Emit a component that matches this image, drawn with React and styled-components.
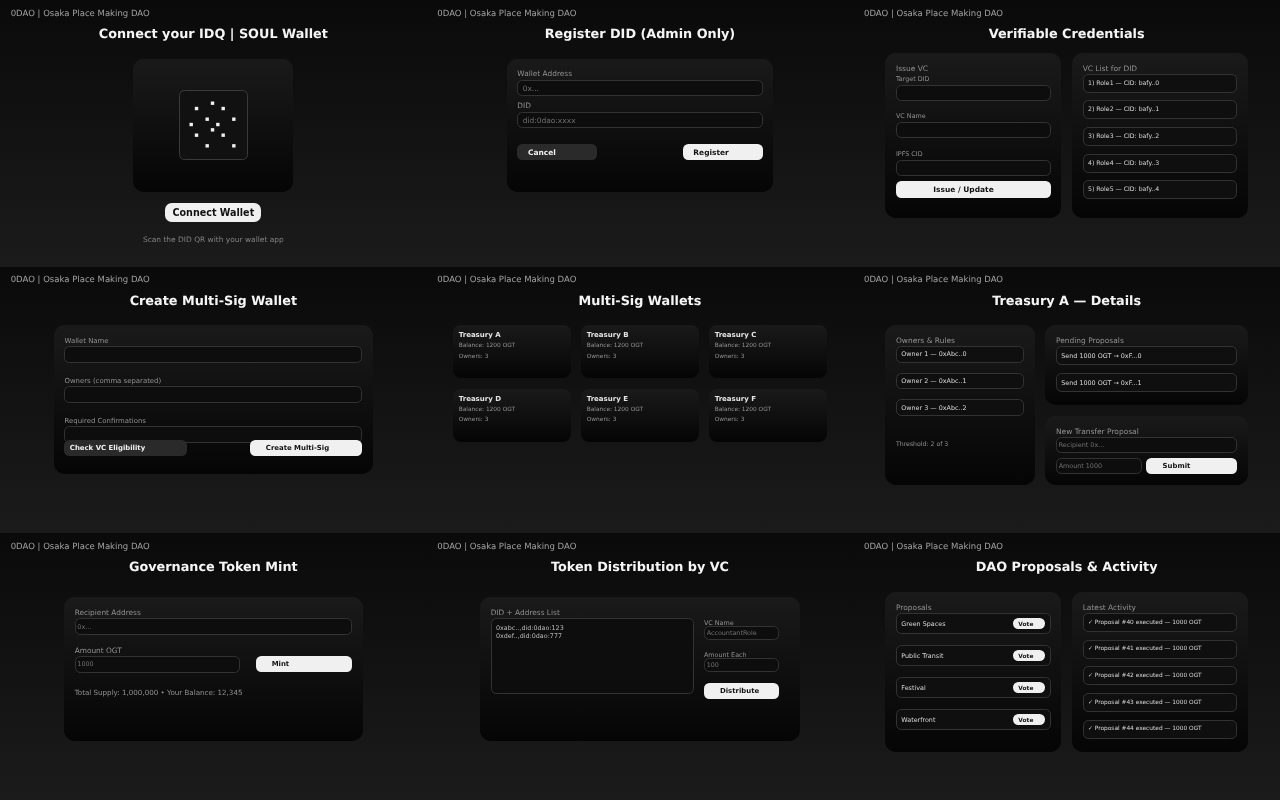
import React from 'react';
import styled, { createGlobalStyle } from 'styled-components';

const GlobalStyle = createGlobalStyle`
    html, body {
        margin: 0;
        padding: 0;
        background: #111;
    }
    * {
        box-sizing: border-box;
    }
`;

const qrDots = [[1, 1], [4, 0], [6, 1], [3, 3], [8, 3], [0, 4], [5, 4], [4, 5], [1, 6], [6, 6], [3, 8], [8, 8]];
const roles = [1, 2, 3, 4, 5];
const wallets = ['A', 'B', 'C', 'D', 'E', 'F'];
const proposals = ['Green Spaces', 'Public Transit', 'Festival', 'Waterfront'];

function Screen({ title, top, gap, children }) {
    return (
        <Tile>
            <Brand>0DAO | Osaka Place Making DAO</Brand>
            <Title>{title}</Title>
            <Body $top={top} $gap={gap}>{children}</Body>
        </Tile>
    );
}

function Field({ label, placeholder, gap, height, size }) {
    return (
        <FieldBox $gap={gap}>
            <Label $size={size}>{label}</Label>
            <Input readOnly placeholder={placeholder} $height={height} />
        </FieldBox>
    );
}

function App() {
    return (
        <Board>
            <GlobalStyle />

            <Screen title="Connect your IDQ | SOUL Wallet" top={17.3}>
                <ConnectColumn>
                    <QrPanel>
                        <QrFrame>
                            <svg width="69" height="70" viewBox="0 0 69 70">
                                {qrDots.map(([x, y]) => (
                                    <rect key={`${x}-${y}`} x={10.5 + x * 5.33} y={11.5 + y * 5.33} width="3.4" height="3.4" fill="#f0f0f0" />
                                ))}
                            </svg>
                        </QrFrame>
                    </QrPanel>
                    <ConnectButton>Connect Wallet</ConnectButton>
                    <Hint>Scan the DID QR with your wallet app</Hint>
                </ConnectColumn>
            </Screen>

            <Screen title="Register DID (Admin Only)" top={17.3}>
                <Panel $w={266.67} $h={133.3}>
                    <Stack $gap={5.33}>
                        <Field label="Wallet Address" placeholder="0x..." />
                        <Field label="DID" placeholder="did:0dao:xxxx" />
                    </Stack>
                    <SplitRow $mt={16}>
                        <Button $dark $w={80} $pad={10.67} $size={7.47}>Cancel</Button>
                        <Button $w={80} $pad={10.67} $size={7.47}>Register</Button>
                    </SplitRow>
                </Panel>
            </Screen>

            <Screen title="Verifiable Credentials" top={11.6} gap={10.67}>
                <Panel $w={176} $h={165}>
                    <SectionTitle>Issue VC</SectionTitle>
                    <Stack $gap={10.67}>
                        <Field label="Target DID" gap={3} size={6.4} />
                        <Field label="VC Name" gap={3} size={6.4} />
                        <Field label="IPFS CID" gap={3} size={6.4} />
                    </Stack>
                    <Button $w={155} $pad={37.3} $mt={5.33} $size={7.47}>Issue / Update</Button>
                </Panel>
                <Panel $w={176} $h={165}>
                    <SectionTitle>VC List for DID</SectionTitle>
                    <Stack $gap={7.67}>
                        {roles.map((n) => (
                            <ListRow key={n} $size={6.2}>{n}) Role{n} — CID: bafy..{n - 1}</ListRow>
                        ))}
                    </Stack>
                </Panel>
            </Screen>

            <Screen title="Create Multi-Sig Wallet" top={17.3}>
                <Panel $w={319} $h={148.7}>
                    <Stack $gap={13.33}>
                        <Field label="Wallet Name" gap={2} height={16.67} size={6.93} />
                        <Field label="Owners (comma separated)" gap={2} height={16.67} size={6.93} />
                        <Field label="Required Confirmations" gap={2} height={16.67} size={6.93} />
                    </Stack>
                    <SplitRow $mt={-3}>
                        <Button $dark $w={123} $pad={5.33}>Check VC Eligibility</Button>
                        <Button $w={112.67} $pad={16.3}>Create Multi-Sig</Button>
                    </SplitRow>
                </Panel>
            </Screen>

            <Screen title="Multi-Sig Wallets" top={17.3}>
                <WalletGrid>
                    {wallets.map((w) => (
                        <WalletCard key={w}>
                            <WalletName>Treasury {w}</WalletName>
                            <WalletMeta>Balance: 1200 OGT</WalletMeta>
                            <WalletMeta>Owners: 3</WalletMeta>
                        </WalletCard>
                    ))}
                </WalletGrid>
            </Screen>

            <Screen title="Treasury A — Details" top={17.3} gap={10.67}>
                <Panel $w={149.33} $h={159.6}>
                    <SectionTitle>Owners &amp; Rules</SectionTitle>
                    <Stack $gap={10}>
                        {[1, 2, 3].map((n) => (
                            <OwnerRow key={n}>Owner {n} — 0xAbc..{n - 1}</OwnerRow>
                        ))}
                    </Stack>
                    <Note $mt={25} $size={6.2}>Threshold: 2 of 3</Note>
                </Panel>
                <SideColumn>
                    <Panel $w={202.67} $h={79.3}>
                        <SectionTitle>Pending Proposals</SectionTitle>
                        <Stack $gap={8}>
                            <PendingRow>Send 1000 OGT → 0xF...0</PendingRow>
                            <PendingRow>Send 1000 OGT → 0xF...1</PendingRow>
                        </Stack>
                    </Panel>
                    <Panel $w={202.67} $h={69}>
                        <SectionTitle>New Transfer Proposal</SectionTitle>
                        <SmallInput readOnly placeholder="Recipient 0x..." $height={16.33} />
                        <TransferRow>
                            <SmallInput readOnly placeholder="Amount 1000" $w={85.67} $height={16.33} />
                            <Button $w={91} $pad={16.3}>Submit</Button>
                        </TransferRow>
                    </Panel>
                </SideColumn>
            </Screen>

            <Screen title="Governance Token Mint" top={22.6}>
                <Panel $w={298.67} $h={144}>
                    <FieldBox $gap={2.33}>
                        <Label>Recipient Address</Label>
                        <SmallInput readOnly placeholder="0x..." />
                    </FieldBox>
                    <FieldBox $gap={2.33} $mt={10.67}>
                        <Label>Amount OGT</Label>
                        <MintRow>
                            <SmallInput readOnly placeholder="1000" $w={165.33} />
                            <Button $w={96.33} $pad={16}>Mint</Button>
                        </MintRow>
                    </FieldBox>
                    <Note $mt={15.8} $size={7.13}>Total Supply: 1,000,000 • Your Balance: 12,345</Note>
                </Panel>
            </Screen>

            <Screen title="Token Distribution by VC" top={22.6}>
                <Panel $w={320} $h={144}>
                    <DistributeLayout>
                        <FieldBox $gap={2.33}>
                            <Label>DID + Address List</Label>
                            <AddressList readOnly defaultValue={'0xabc..,did:0dao:123\n0xdef..,did:0dao:777'} />
                        </FieldBox>
                        <DistributeSide>
                            <Stack $gap={10}>
                                <FieldBox $gap={0}>
                                    <Label $size={6.4}>VC Name</Label>
                                    <SmallInput readOnly placeholder="AccountantRole" $height={14} />
                                </FieldBox>
                                <FieldBox $gap={0}>
                                    <Label $size={6.4}>Amount Each</Label>
                                    <SmallInput readOnly placeholder="100" $height={14} />
                                </FieldBox>
                            </Stack>
                            <Button $w={75} $pad={16} $mt={10.33}>Distribute</Button>
                        </DistributeSide>
                    </DistributeLayout>
                </Panel>
            </Screen>

            <Screen title="DAO Proposals &amp; Activity" top={17.6} gap={10.67}>
                <Panel $w={176} $h={159.7}>
                    <SectionTitle>Proposals</SectionTitle>
                    <Stack $gap={10.67}>
                        {proposals.map((p) => (
                            <ProposalRow key={p}>
                                {p}
                                <VoteButton>Vote</VoteButton>
                            </ProposalRow>
                        ))}
                    </Stack>
                </Panel>
                <Panel $w={176} $h={159.7}>
                    <SectionTitle>Latest Activity</SectionTitle>
                    <Stack $gap={7.67}>
                        {[40, 41, 42, 43, 44].map((n) => (
                            <ActivityRow key={n} $size={5.87}>✓ Proposal #{n} executed — 1000 OGT</ActivityRow>
                        ))}
                    </Stack>
                </Panel>
            </Screen>
        </Board>
    );
}

const Board = styled.div`
    width: 1280px;
    height: 800px;
    display: grid;
    grid-template-columns: repeat(3, 1fr);
    grid-template-rows: repeat(3, 1fr);
    font-family: "DejaVu Sans", sans-serif;
    text-rendering: geometricPrecision;
    overflow: hidden;
    will-change: transform;
    filter: blur(0.35px);
`;

const Tile = styled.section`
    display: flex;
    flex-direction: column;
    min-width: 0;
    min-height: 0;
    background: linear-gradient(180deg, #0a0a0a 0%, #1b1b1b 100%);
`;

const Brand = styled.div`
    padding: 8.5px 0 0 10.67px;
    font-size: 8.53px;
    line-height: 11px;
    color: #a0a0a0;
`;

const Title = styled.h1`
    margin: 7.4px 0 -1.4px;
    font-size: 12.8px;
    line-height: 16px;
    font-weight: 700;
    text-align: center;
    color: #f5f5f5;
`;

const Body = styled.div`
    display: flex;
    justify-content: center;
    align-items: flex-start;
    gap: ${(p) => p.$gap || 0}px;
    margin-top: ${(p) => p.$top}px;
`;

const Panel = styled.div`
    width: ${(p) => p.$w}px;
    height: ${(p) => p.$h}px;
    padding: 10.67px;
    border-radius: 10.67px;
    background: linear-gradient(180deg, #1a1a1a 0%, #050505 100%);
`;

const ConnectColumn = styled.div`
    display: flex;
    flex-direction: column;
    align-items: center;
`;

const QrPanel = styled.div`
    width: 160px;
    height: 133.3px;
    display: flex;
    align-items: center;
    justify-content: center;
    border-radius: 10.67px;
    background: linear-gradient(180deg, #1a1a1a 0%, #050505 100%);
`;

const QrFrame = styled.div`
    width: 69.5px;
    height: 70px;
    border: 1px solid #3a3a3a;
    border-radius: 5.33px;
    background: #111;
    overflow: hidden;
    svg {
        display: block;
        margin: -1px;
    }
`;

const ConnectButton = styled.button`
    margin-top: 10.67px;
    width: 96.33px;
    height: 19.33px;
    padding: 0;
    border: none;
    border-radius: 6.67px;
    background: #f0f0f0;
    color: #111;
    font-family: inherit;
    font-size: 9.6px;
    font-weight: 700;
`;

const Hint = styled.p`
    margin: 13px 0 0;
    font-size: 7.47px;
    line-height: 9px;
    color: #808080;
`;

const Stack = styled.div`
    display: flex;
    flex-direction: column;
    gap: ${(p) => p.$gap}px;
`;

const FieldBox = styled.div`
    display: flex;
    flex-direction: column;
    gap: ${(p) => (p.$gap === undefined ? 2.67 : p.$gap)}px;
    margin-top: ${(p) => p.$mt || 0}px;
`;

const Label = styled.label`
    padding-top: 0.8px;
    margin-bottom: -0.8px;
    font-size: ${(p) => p.$size || 7.4}px;
    line-height: 8px;
    color: #909090;
`;

const SectionTitle = styled.div`
    padding-top: 0.8px;
    margin-bottom: 1.2px;
    font-size: 7.47px;
    line-height: 8px;
    color: #909090;
`;

const Input = styled.input`
    display: block;
    width: 100%;
    height: ${(p) => p.$height || 16}px;
    padding: 0 4.33px;
    border: 1px solid #333;
    border-radius: 5.33px;
    outline: none;
    background: #0d0d0d;
    color: #ccc;
    font-family: inherit;
    font-size: 7.47px;
    &::placeholder {
        color: #707070;
    }
`;

const SmallInput = styled(Input)`
    width: ${(p) => (p.$w ? `${p.$w}px` : '100%')};
    height: ${(p) => p.$height || 16.67}px;
    flex: none;
    padding: 0 1.67px;
    font-size: 6.4px;
`;

const Button = styled.button`
    display: block;
    width: ${(p) => p.$w}px;
    height: 16.33px;
    margin-top: ${(p) => p.$mt || 0}px;
    padding: 0 0 0 ${(p) => p.$pad}px;
    border: none;
    border-radius: 5.33px;
    background: ${(p) => (p.$dark ? '#2a2a2a' : '#f0f0f0')};
    color: ${(p) => (p.$dark ? '#f0f0f0' : '#111')};
    font-family: inherit;
    font-size: ${(p) => p.$size || 6.93}px;
    font-weight: 700;
    text-align: left;
    white-space: nowrap;
    position: relative;
`;

const SplitRow = styled.div`
    display: flex;
    justify-content: space-between;
    margin-top: ${(p) => p.$mt}px;
    position: relative;
`;

const ListRow = styled.div`
    height: 19px;
    display: flex;
    align-items: center;
    padding: 0 4.33px;
    border: 1px solid #333;
    border-radius: 5.33px;
    background: #0f0f0f;
    color: #d8d8d8;
    font-size: ${(p) => p.$size || 6.4}px;
    white-space: nowrap;
`;

const OwnerRow = styled(ListRow)`
    height: 16.67px;
`;

const PendingRow = styled(ListRow)``;

const ActivityRow = styled(ListRow)``;

const ProposalRow = styled(ListRow)`
    height: 21.33px;
    justify-content: space-between;
`;

const VoteButton = styled.button`
    width: 32.33px;
    height: 10.67px;
    padding: 0 0 0 5.33px;
    border: none;
    border-radius: 5.33px;
    background: #f0f0f0;
    color: #111;
    font-family: inherit;
    font-size: 5.87px;
    font-weight: 700;
    text-align: left;
`;

const Note = styled.div`
    margin-top: ${(p) => p.$mt}px;
    font-size: ${(p) => p.$size}px;
    line-height: 8px;
    color: #909090;
`;

const WalletGrid = styled.div`
    display: grid;
    grid-template-columns: repeat(3, 117.33px);
    grid-auto-rows: 53px;
    gap: 10.67px;
`;

const WalletCard = styled.div`
    padding: 5.8px 5.33px 0;
    border-radius: 8px;
    background: linear-gradient(180deg, #1a1a1a 0%, #050505 100%);
`;

const WalletName = styled.div`
    font-size: 7px;
    line-height: 8px;
    font-weight: 700;
    color: #e4e4e4;
`;

const WalletMeta = styled.div`
    margin-top: 2.67px;
    font-size: 5.87px;
    line-height: 8px;
    color: #909090;
`;

const SideColumn = styled.div`
    display: flex;
    flex-direction: column;
    gap: 11.3px;
`;

const TransferRow = styled.div`
    display: flex;
    justify-content: space-between;
    margin-top: 5px;
`;

const MintRow = styled.div`
    display: flex;
    justify-content: space-between;
`;

const DistributeLayout = styled.div`
    display: flex;
    gap: 10.33px;
`;

const DistributeSide = styled.div`
    width: 75px;
    padding-top: 10.33px;
`;

const AddressList = styled.textarea`
    display: block;
    width: 203px;
    height: 75.33px;
    padding: 6px 4.33px;
    border: 1px solid #333;
    border-radius: 5.33px;
    outline: none;
    resize: none;
    background: #0d0d0d;
    color: #bbb;
    font-family: inherit;
    font-size: 6.4px;
    line-height: 7.33px;
`;

export default App
